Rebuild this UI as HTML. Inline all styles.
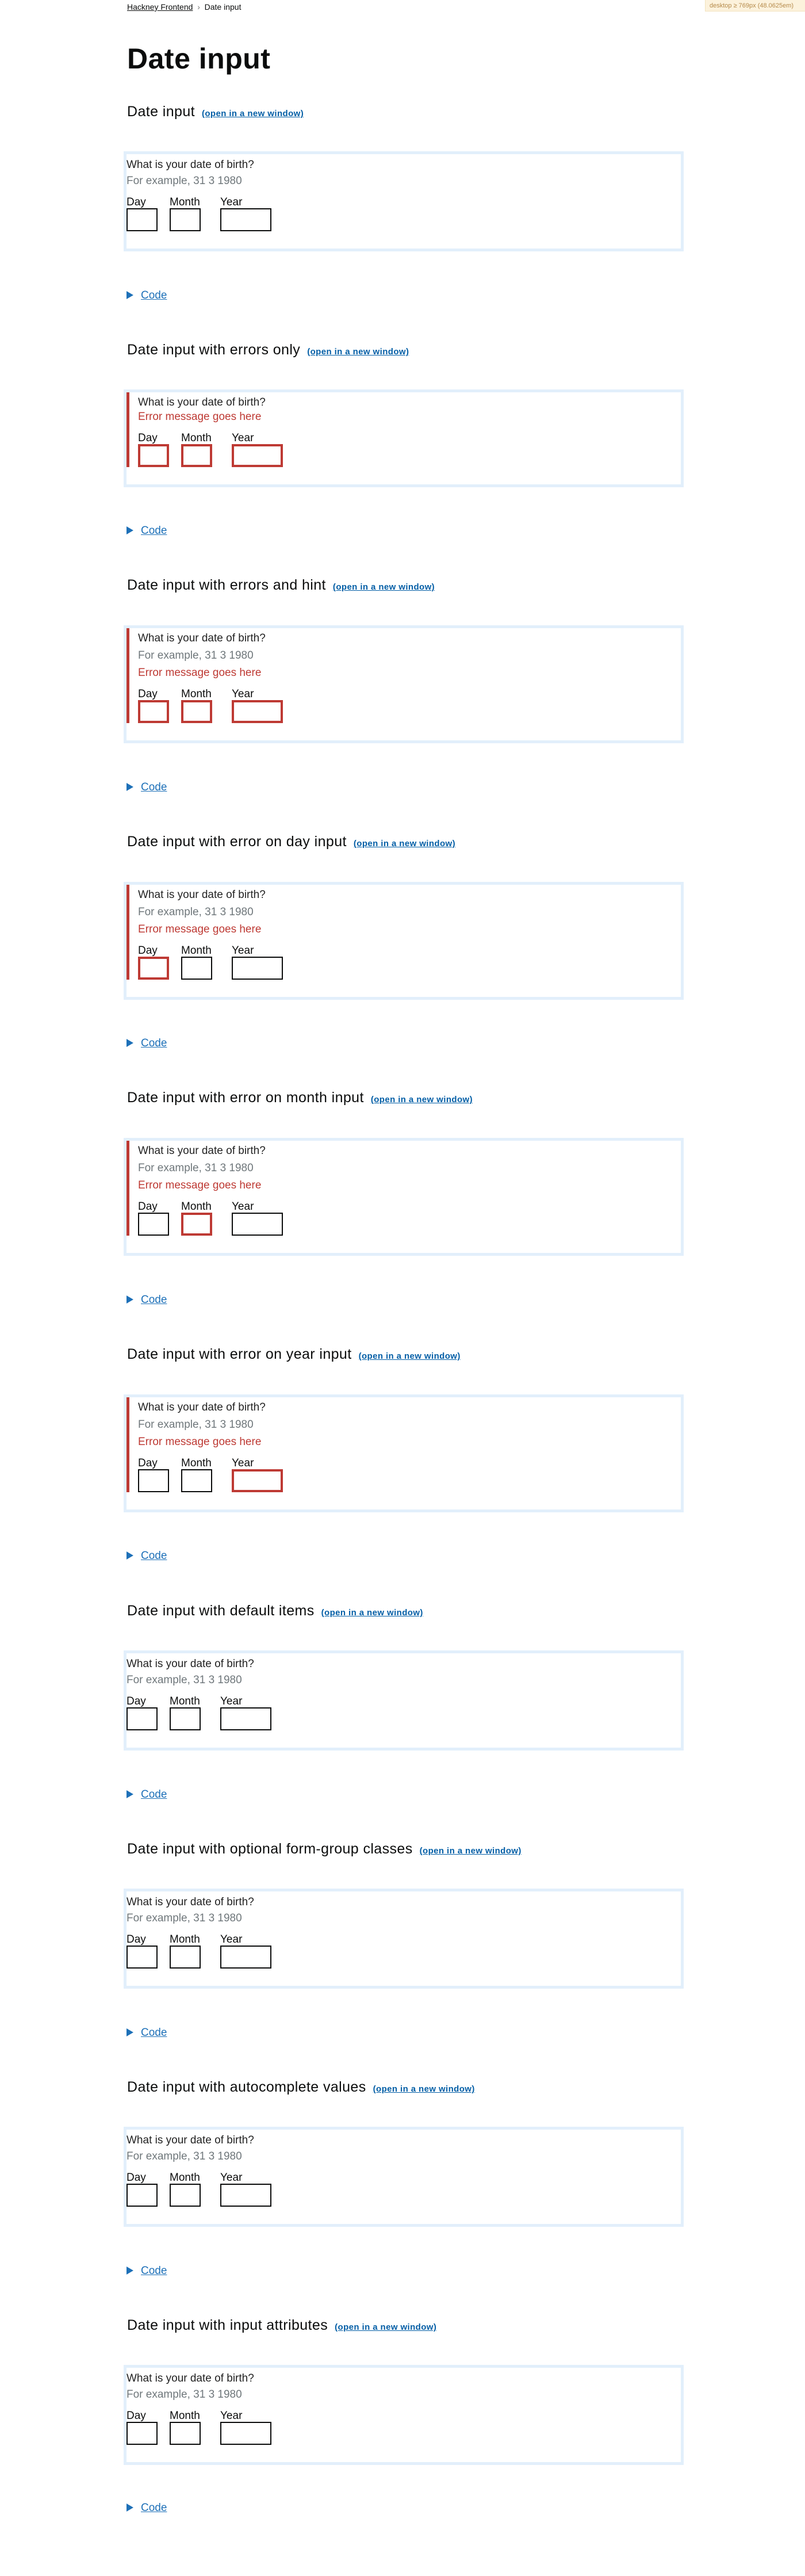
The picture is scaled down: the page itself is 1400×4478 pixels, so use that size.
<!DOCTYPE html>
<html><head><meta charset="utf-8"><style>
*{margin:0;padding:0;box-sizing:border-box}
body{width:1400px;height:4478px;position:relative;background:#fff;font-family:"Liberation Sans",sans-serif;color:#0b0c0c;overflow:hidden}
.a{position:absolute;white-space:nowrap}
.bc{left:221px;top:3px;font-size:14px;line-height:18px;color:#0b0c0c}
.bc u{text-decoration:underline}
.badge{left:1226px;top:0;width:174px;height:20px;background:#fcf2dc;color:#b58a4a;font-size:11px;line-height:20px;padding-left:7px;border:1px solid #f3e4c0;border-top:0;border-right:0}
h1{position:absolute;left:221px;top:72px;font-size:50px;line-height:60px;font-weight:bold;letter-spacing:0.5px}
.h{left:221px;font-size:25px;line-height:30px;letter-spacing:0.4px;font-weight:normal}
.h a{font-size:15px;font-weight:bold;color:#025ea6;text-decoration:underline;margin-left:12px;letter-spacing:0.4px}
.box{position:absolute;left:215px;width:974px;border:5px solid #e2effb;background:#fff}
.t{position:absolute;white-space:nowrap;line-height:24px}
.lbl{font-size:19px;font-weight:300;color:#222}
.hint{font-size:19px;color:#6f777b}
.err{font-size:19px;color:#be3a34}
.dl{font-size:19px;color:#0b0c0c}
.in{position:absolute;height:40px;border:2px solid #0b0c0c}
.in.r{border:4px solid #be3a34}
.bar{position:absolute;left:0;width:5px;background:#be3a34}
.code{left:220px;font-size:19px;line-height:24px;color:#1d70b8}
.code i{display:inline-block;width:0;height:0;border-top:7px solid transparent;border-bottom:7px solid transparent;border-left:12px solid #1d70b8;vertical-align:-1px;margin-right:13px}
.code span{text-decoration:underline;font-weight:300}
</style></head><body>
<div class="a bc"><u>Hackney Frontend</u> &nbsp;<span style="color:#777">›</span>&nbsp; Date input</div>
<div class="a badge">desktop ≥ 769px (48.0625em)</div>
<h1>Date input</h1>

<!-- 1 -->
<div class="a h" style="top:179px">Date input<a>(open in a new window)</a></div>
<div class="box" style="top:263px;height:174px">
<div class="t lbl" style="left:0;top:7px">What is your date of birth?</div>
<div class="t hint" style="left:0;top:35px">For example, 31 3 1980</div>
<div class="t dl" style="left:0;top:72px">Day</div><div class="t dl" style="left:75px;top:72px">Month</div><div class="t dl" style="left:163px;top:72px">Year</div>
<div class="in" style="left:0;top:94px;width:54px"></div><div class="in" style="left:75px;top:94px;width:54px"></div><div class="in" style="left:163px;top:94px;width:89px"></div>
</div>
<div class="a code" style="top:502px"><i></i><span>Code</span></div>

<!-- 2 errors only -->
<div class="a h" style="top:593px">Date input with errors only<a>(open in a new window)</a></div>
<div class="box" style="top:677px;height:170px">
<div class="bar" style="top:0;height:130px"></div>
<div class="t lbl" style="left:20px;top:6px">What is your date of birth?</div>
<div class="t err" style="left:20px;top:31px">Error message goes here</div>
<div class="t dl" style="left:20px;top:68px">Day</div><div class="t dl" style="left:95px;top:68px">Month</div><div class="t dl" style="left:183px;top:68px">Year</div>
<div class="in r" style="left:20px;top:90px;width:54px"></div><div class="in r" style="left:95px;top:90px;width:54px"></div><div class="in r" style="left:183px;top:90px;width:89px"></div>
</div>
<div class="a code" style="top:911px"><i></i><span>Code</span></div>

<!-- 3 errors and hint -->
<div class="a h" style="top:1002px">Date input with errors and hint<a>(open in a new window)</a></div>
<div class="box" style="top:1087px;height:205px">
<div class="bar" style="top:0;height:165px"></div>
<div class="t lbl" style="left:20px;top:6px">What is your date of birth?</div>
<div class="t hint" style="left:20px;top:36px">For example, 31 3 1980</div>
<div class="t err" style="left:20px;top:66px">Error message goes here</div>
<div class="t dl" style="left:20px;top:103px">Day</div><div class="t dl" style="left:95px;top:103px">Month</div><div class="t dl" style="left:183px;top:103px">Year</div>
<div class="in r" style="left:20px;top:125px;width:54px"></div><div class="in r" style="left:95px;top:125px;width:54px"></div><div class="in r" style="left:183px;top:125px;width:89px"></div>
</div>
<div class="a code" style="top:1357px"><i></i><span>Code</span></div>

<!-- 4 day -->
<div class="a h" style="top:1448px">Date input with error on day input<a>(open in a new window)</a></div>
<div class="box" style="top:1533px;height:205px">
<div class="bar" style="top:0;height:165px"></div>
<div class="t lbl" style="left:20px;top:6px">What is your date of birth?</div>
<div class="t hint" style="left:20px;top:36px">For example, 31 3 1980</div>
<div class="t err" style="left:20px;top:66px">Error message goes here</div>
<div class="t dl" style="left:20px;top:103px">Day</div><div class="t dl" style="left:95px;top:103px">Month</div><div class="t dl" style="left:183px;top:103px">Year</div>
<div class="in r" style="left:20px;top:125px;width:54px"></div><div class="in" style="left:95px;top:125px;width:54px"></div><div class="in" style="left:183px;top:125px;width:89px"></div>
</div>
<div class="a code" style="top:1802px"><i></i><span>Code</span></div>

<!-- 5 month -->
<div class="a h" style="top:1893px">Date input with error on month input<a>(open in a new window)</a></div>
<div class="box" style="top:1978px;height:205px">
<div class="bar" style="top:0;height:165px"></div>
<div class="t lbl" style="left:20px;top:6px">What is your date of birth?</div>
<div class="t hint" style="left:20px;top:36px">For example, 31 3 1980</div>
<div class="t err" style="left:20px;top:66px">Error message goes here</div>
<div class="t dl" style="left:20px;top:103px">Day</div><div class="t dl" style="left:95px;top:103px">Month</div><div class="t dl" style="left:183px;top:103px">Year</div>
<div class="in" style="left:20px;top:125px;width:54px"></div><div class="in r" style="left:95px;top:125px;width:54px"></div><div class="in" style="left:183px;top:125px;width:89px"></div>
</div>
<div class="a code" style="top:2248px"><i></i><span>Code</span></div>

<!-- 6 year -->
<div class="a h" style="top:2339px">Date input with error on year input<a>(open in a new window)</a></div>
<div class="box" style="top:2424px;height:205px">
<div class="bar" style="top:0;height:165px"></div>
<div class="t lbl" style="left:20px;top:6px">What is your date of birth?</div>
<div class="t hint" style="left:20px;top:36px">For example, 31 3 1980</div>
<div class="t err" style="left:20px;top:66px">Error message goes here</div>
<div class="t dl" style="left:20px;top:103px">Day</div><div class="t dl" style="left:95px;top:103px">Month</div><div class="t dl" style="left:183px;top:103px">Year</div>
<div class="in" style="left:20px;top:125px;width:54px"></div><div class="in" style="left:95px;top:125px;width:54px"></div><div class="in r" style="left:183px;top:125px;width:89px"></div>
</div>
<div class="a code" style="top:2693px"><i></i><span>Code</span></div>

<!-- 7 -->
<div class="a h" style="top:2785px">Date input with default items<a>(open in a new window)</a></div>
<div class="box" style="top:2869px;height:174px">
<div class="t lbl" style="left:0;top:7px">What is your date of birth?</div>
<div class="t hint" style="left:0;top:35px">For example, 31 3 1980</div>
<div class="t dl" style="left:0;top:72px">Day</div><div class="t dl" style="left:75px;top:72px">Month</div><div class="t dl" style="left:163px;top:72px">Year</div>
<div class="in" style="left:0;top:94px;width:54px"></div><div class="in" style="left:75px;top:94px;width:54px"></div><div class="in" style="left:163px;top:94px;width:89px"></div>
</div>
<div class="a code" style="top:3108px"><i></i><span>Code</span></div>

<!-- 8 -->
<div class="a h" style="top:3199px">Date input with optional form-group classes<a>(open in a new window)</a></div>
<div class="box" style="top:3283px;height:174px">
<div class="t lbl" style="left:0;top:7px">What is your date of birth?</div>
<div class="t hint" style="left:0;top:35px">For example, 31 3 1980</div>
<div class="t dl" style="left:0;top:72px">Day</div><div class="t dl" style="left:75px;top:72px">Month</div><div class="t dl" style="left:163px;top:72px">Year</div>
<div class="in" style="left:0;top:94px;width:54px"></div><div class="in" style="left:75px;top:94px;width:54px"></div><div class="in" style="left:163px;top:94px;width:89px"></div>
</div>
<div class="a code" style="top:3522px"><i></i><span>Code</span></div>

<!-- 9 -->
<div class="a h" style="top:3613px">Date input with autocomplete values<a>(open in a new window)</a></div>
<div class="box" style="top:3697px;height:174px">
<div class="t lbl" style="left:0;top:7px">What is your date of birth?</div>
<div class="t hint" style="left:0;top:35px">For example, 31 3 1980</div>
<div class="t dl" style="left:0;top:72px">Day</div><div class="t dl" style="left:75px;top:72px">Month</div><div class="t dl" style="left:163px;top:72px">Year</div>
<div class="in" style="left:0;top:94px;width:54px"></div><div class="in" style="left:75px;top:94px;width:54px"></div><div class="in" style="left:163px;top:94px;width:89px"></div>
</div>
<div class="a code" style="top:3936px"><i></i><span>Code</span></div>

<!-- 10 -->
<div class="a h" style="top:4027px">Date input with input attributes<a>(open in a new window)</a></div>
<div class="box" style="top:4111px;height:174px">
<div class="t lbl" style="left:0;top:7px">What is your date of birth?</div>
<div class="t hint" style="left:0;top:35px">For example, 31 3 1980</div>
<div class="t dl" style="left:0;top:72px">Day</div><div class="t dl" style="left:75px;top:72px">Month</div><div class="t dl" style="left:163px;top:72px">Year</div>
<div class="in" style="left:0;top:94px;width:54px"></div><div class="in" style="left:75px;top:94px;width:54px"></div><div class="in" style="left:163px;top:94px;width:89px"></div>
</div>
<div class="a code" style="top:4348px"><i></i><span>Code</span></div>
</body></html>
